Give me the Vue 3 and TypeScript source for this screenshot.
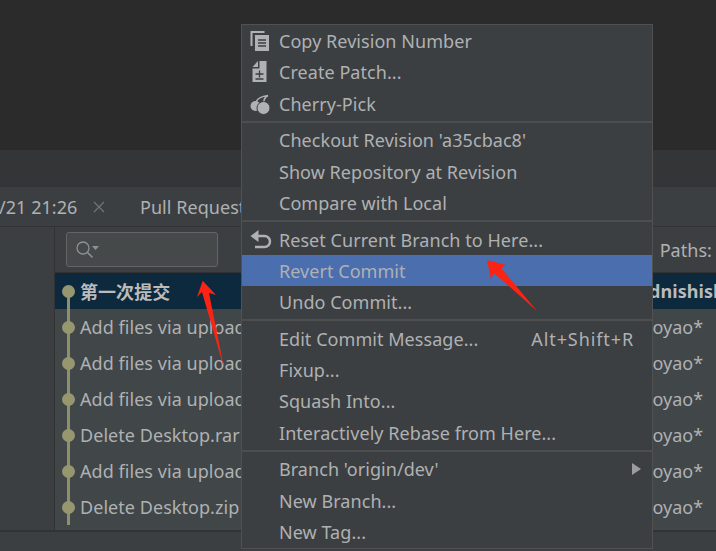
<script setup lang="ts">
interface Item { label: string; icon?: string; shortcut?: string; active?: boolean; submenu?: boolean }
const groups: Item[][] = [
  [{ label: 'Copy Revision Number', icon: 'copy' }, { label: 'Create Patch...', icon: 'patch' }, { label: 'Cherry-Pick', icon: 'cherry' }],
  [{ label: "Checkout Revision 'a35cbac8'" }, { label: 'Show Repository at Revision' }, { label: 'Compare with Local' }],
  [{ label: 'Reset Current Branch to Here...', icon: 'reset' }, { label: 'Revert Commit', active: true }, { label: 'Undo Commit...' }],
  [{ label: 'Edit Commit Message...', shortcut: 'Alt+Shift+R' }, { label: 'Fixup...' }, { label: 'Squash Into...' }, { label: 'Interactively Rebase from Here...' }],
  [{ label: "Branch 'origin/dev'", submenu: true }, { label: 'New Branch...' }, { label: 'New Tag...' }],
]
const commits = [
  { msg: '第一次提交', author: 'Wdnishish', selected: true },
  { msg: 'Add files via upload', author: 'xiaoyao*' },
  { msg: 'Add files via upload', author: 'xiaoyao*' },
  { msg: 'Add files via upload', author: 'xiaoyao*' },
  { msg: 'Delete Desktop.rar', author: 'xiaoyao*' },
  { msg: 'Add files via upload', author: 'xiaoyao*' },
  { msg: 'Delete Desktop.zip', author: 'xiaoyao*' },
]
</script>

<template>
  <div class="page">
    <div class="top"></div>
    <div class="strip"></div>
    <div class="tabs">
      <span class="tab-date">/21 21:26</span>
      <svg class="tab-close" width="14" height="14" viewBox="0 0 14 14"><path d="M2 2l10 10M12 2L2 12" stroke="#6f7375" stroke-width="1.4" fill="none" /></svg>
      <span class="tab-pr">Pull Requests</span>
    </div>
    <div class="body">
      <div class="side"></div>
      <div class="main">
        <div class="toolbar">
          <div class="search">
            <svg width="26" height="20" viewBox="0 0 26 20"><circle cx="8" cy="8" r="6" fill="none" stroke="#8d9193" stroke-width="1.3" /><path d="M12.5 12.5l5 5" stroke="#8d9193" stroke-width="1.6" /><path d="M17 6h7l-3.5 4z" fill="#8d9193" /></svg>
          </div>
          <span class="paths">Paths:</span>
        </div>
        <div class="log">
          <div v-for="(c, i) in commits" :key="i" class="row" :class="{ selected: c.selected }">
            <span class="line" :class="{ first: i === 0 }"></span>
            <span class="dot"></span>
            <span class="msg">{{ c.msg }}</span>
            <span class="author">{{ c.author }}</span>
          </div>
        </div>
      </div>
    </div>
    <div class="footer"></div>

    <div class="menu">
      <div v-for="(g, gi) in groups" :key="gi" class="group">
        <div v-for="it in g" :key="it.label" class="item" :class="{ active: it.active }">
          <span class="ico">
            <svg v-if="it.icon === 'copy'" width="20" height="20" viewBox="0 1 20 20">
              <path d="M0.5 1h14v2H2.500v13h-2z" fill="#afb1b3" />
              <path d="M5 5h14v16H5z" fill="#afb1b3" />
              <path d="M8 10h8M8 13h8M8 16h8" stroke="#3c3f41" stroke-width="1.300" />
            </svg>
            <svg v-else-if="it.icon === 'patch'" width="20" height="22" viewBox="0 0 20 22">
              <path d="M8 0v6H2.500zM9.500 0h7v21h-14V7.500h7z" fill="#afb1b3" />
              <path d="M9.500 9.500v7M5.500 13h8M5.500 18h8" stroke="#3c3f41" stroke-width="1.300" />
            </svg>
            <svg v-else-if="it.icon === 'cherry'" width="20" height="20" viewBox="0 0 20 20">
              <path d="M6 8C7 5.500 10 2.500 18 1.500M14 9C13.500 6 14.500 3.500 18 1.500" stroke="#afb1b3" stroke-width="1.500" fill="none" />
              <circle cx="5.500" cy="12" r="5" fill="#afb1b3" />
              <circle cx="13.500" cy="14" r="6.500" fill="#afb1b3" stroke="#3c3f41" stroke-width="1" />
            </svg>
            <svg v-else-if="it.icon === 'reset'" width="20" height="20" viewBox="0 0 20 20">
              <path d="M0.500 6l8-6v12z" fill="#afb1b3" />
              <path d="M8 6h6.500a5.500 5.500 0 0 1 0 11H5" fill="none" stroke="#afb1b3" stroke-width="2.500" />
            </svg>
          </span>
          <span class="label">{{ it.label }}</span>
          <span v-if="it.shortcut" class="shortcut">{{ it.shortcut }}</span>
          <span v-if="it.submenu" class="caret"></span>
        </div>
      </div>
    </div>

    <svg class="arrows" width="716" height="551" viewBox="0 0 716 551">
      <path d="M202.700 280.700L216 295 209 293 224 368 202 292 197 297z" fill="#fb2313" />
      <path d="M487 260L506 265 501 268 537 311 494 273 491 279z" fill="#fb2313" />
    </svg>
  </div>
</template>

<style>
html, body { margin: 0; background: #3c3f41; overflow: hidden; }
</style>

<style scoped>
.page {
  position: relative;
  width: 716px;
  height: 551px;
  overflow: hidden;
  display: flex;
  flex-direction: column;
  background: #3c3f41;
  color: #afb1b3;
  font-family: "Noto Sans", "Noto Sans CJK SC", sans-serif;
  font-size: 18px;
  letter-spacing: 0.05px;
}
.top { height: 150px; background: #2b2b2b; }
.strip { height: 37px; background: #333537; }
.tabs {
  height: 39px;
  display: flex;
  align-items: center;
  background: #3c3f41;
  border-bottom: 1px solid #323232;
  white-space: nowrap;
}
.tab-date { margin-left: -1px; width: 84px; }
.tab-close { margin-left: 9px; }
.tab-pr { margin-left: 34px; }
.body { flex: 1; display: flex; min-height: 0; }
.side { width: 54px; background: #3c3f41; border-right: 1px solid #323232; }
.main { flex: 1; display: flex; flex-direction: column; min-width: 0; }
.toolbar {
  height: 45px;
  display: flex;
  align-items: center;
  justify-content: space-between;
  padding: 0 4px 0 11px;
  border-bottom: 1px solid #323232;
}
.search {
  width: 152px;
  height: 35px;
  box-sizing: border-box;
  display: flex;
  align-items: center;
  padding-left: 8px;
  background: #45494a;
  border: 1.500px solid #646464;
  border-radius: 3px;
}
.paths { white-space: nowrap; }
.log { flex: 1; background: #414648; overflow: hidden; }
.row {
  position: relative;
  height: 36px;
  display: flex;
  align-items: center;
  white-space: nowrap;
}
.row.selected { background: #0d293e; font-weight: 700; color: #bbbbbb; }
.line { position: absolute; left: 12px; top: 0; bottom: 0; width: 3px; background: #8f8f6b; }
.line.first { top: 18px; }
.dot { position: absolute; left: 7px; top: 12px; width: 13px; height: 13px; border-radius: 50%; background: #97976f; }
.msg { margin-left: 25px; }
.author { position: absolute; left: 573px; }
.row.selected .author { left: 577px; }
.footer { height: 19px; border-top: 2px solid #313335; background: #3c3f41; }
.menu {
  position: absolute;
  left: 241px;
  top: 24px;
  width: 412px;
  height: 525px;
  box-sizing: border-box;
  background: #3c3f41;
  border: 1px solid #515151;
  padding-top: 0.400px;
}
.group { padding: 1.750px 0; border-top: 2px solid #4c4e50; }
.group:first-child { border-top: 0; padding-top: 0; }
.item { height: 31.250px; display: flex; align-items: center; white-space: nowrap; padding-right: 18px; }
.item.active { background: #4b6eaf; }
.ico { width: 37px; box-sizing: border-box; padding-right: 2px; flex: none; display: flex; justify-content: center; }
.ico svg { overflow: visible; }
.label { flex: 1; }
.shortcut { flex: none; letter-spacing: 0.900px; }
.caret {
  width: 0;
  height: 0;
  margin-right: -7px;
  border-left: 9px solid #9a9c9e;
  border-top: 6px solid transparent;
  border-bottom: 6px solid transparent;
}
.arrows { position: absolute; left: 0; top: 0; pointer-events: none; }
</style>
